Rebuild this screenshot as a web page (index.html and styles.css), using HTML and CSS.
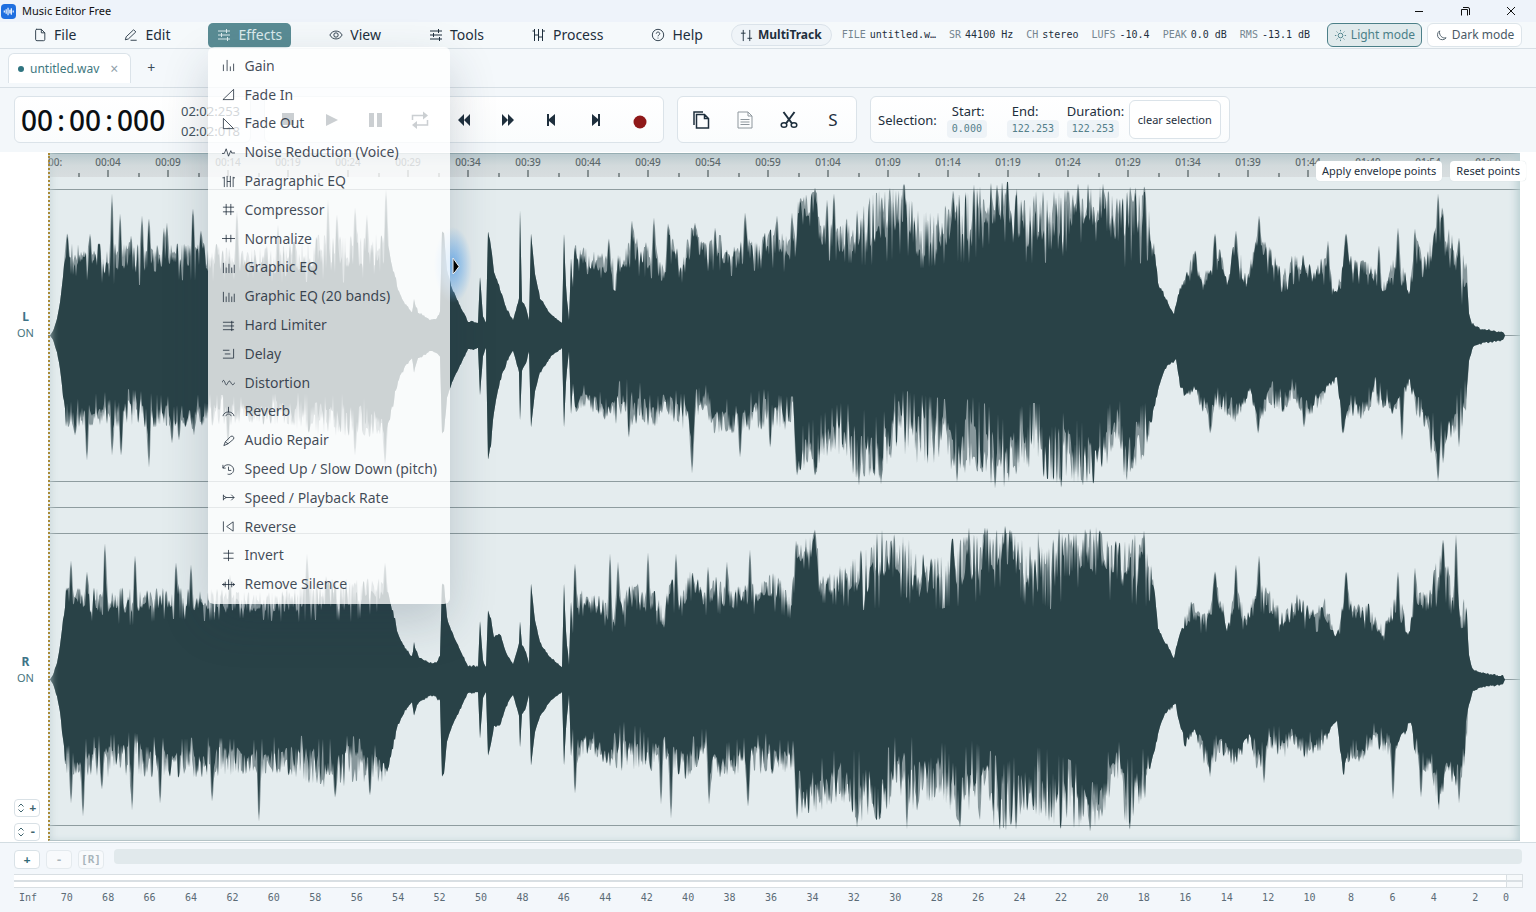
FILE: index.html
```html
<!DOCTYPE html>
<html lang="en">
<head>
<meta charset="utf-8">
<title>Music Editor Free</title>
<link rel="stylesheet" href="styles.css">
</head>
<body>
<svg class="sprite" aria-hidden="true">
  <symbol id="i-file" viewBox="0 0 14 16"><path d="M2.500 1.500h6l4 4v7.500a1.500 1.500 0 0 1-1.500 1.500h-7.500a1.500 1.500 0 0 1-1.500-1.500v-10a1.500 1.500 0 0 1 1-1.500zM8.500 1.500v4h4"/></symbol>
  <symbol id="i-edit" viewBox="0 0 16 16"><path d="M1.500 13.500l1-3.500 8.500-8 2.500 2.500-8.500 8zM7.500 14h7"/></symbol>
  <symbol id="i-sliders" viewBox="0 0 14 14"><path d="M1 3h12M1 7h12M1 11h12M9.500 1v4M4.500 5v4M10.500 9v4"/></symbol>
  <symbol id="i-eye" viewBox="0 0 16 16"><path d="M1 8c3-6 11-6 14 0-3 6-11 6-14 0z"/><circle cx="8" cy="8" r="2.500"/></symbol>
  <symbol id="i-process" viewBox="0 0 14 14"><path d="M2.500 1v12M6.500 1v12M10.500 1v12M.500 3h2M2.500 7h4M6.500 9h4M10.500 3h2.500"/></symbol>
  <symbol id="i-help" viewBox="0 0 16 16"><circle cx="8" cy="8" r="6.500"/><path d="M6 6.500c0-2.500 4-2.500 4 0 0 1.500-2 1.500-2 3M8 11v1"/></symbol>
  <symbol id="i-multi" viewBox="0 0 14 14"><path d="M3.500 1v12M1 4.500h5M10.500 1v12M8 10h5"/></symbol>
  <symbol id="i-sun" viewBox="0 0 14 14"><circle cx="7" cy="7" r="2.500"/><path d="M7 1v1.500M7 11.500v1.500M1 7h1.500M11.500 7h1.500M2.800 2.800l1 1M10.200 10.200l1 1M2.800 11.200l1-1M10.200 3.800l1-1"/></symbol>
  <symbol id="i-moon" viewBox="0 0 14 14"><path d="M5 2a5.200 5.200 0 1 0 7 7.500c-4 1-8-2.500-7-7.500z"/></symbol>
  <symbol id="i-gain" viewBox="0 0 14 14"><path d="M1.500 6v7M5.500 1v12M9 8v5M12.500 5v8"/></symbol>
  <symbol id="i-fadein" viewBox="0 0 14 14"><path d="M1 12.500L12.500 1.500v11z"/></symbol>
  <symbol id="i-fadeout" viewBox="0 0 14 14"><path d="M1.500 1.500v11h11z"/></symbol>
  <symbol id="i-noise" viewBox="0 0 14 14"><path d="M0 8h2.500l2-5 2.500 8 2.500-6 1 2.500H14"/></symbol>
  <symbol id="i-para" viewBox="0 0 14 14"><path d="M2.500 2v11M5.500 1v12M9 1v12M12 2v11M.500 3h2M5.500 7H9M12 3h2"/></symbol>
  <symbol id="i-comp" viewBox="0 0 14 14"><path d="M1 4.500h12M1 9.500h12M4.500 1v12M9.500 1v12"/></symbol>
  <symbol id="i-norm" viewBox="0 0 14 14"><path d="M0 7h14M4.500 3v8M9.500 3v8"/></symbol>
  <symbol id="i-geq" viewBox="0 0 14 14"><path d="M1.500 2v11M4.500 7v6M7.500 3v10M10.500 7v6M13.200 4v9"/></symbol>
  <symbol id="i-limit" viewBox="0 0 14 14"><path d="M1 3.500h12M1 7.500h12M1 11.500h12M10.500 2v11"/></symbol>
  <symbol id="i-delay" viewBox="0 0 14 14"><path d="M1 3.500h7M3 7.500h6M1 12h11.500V2"/></symbol>
  <symbol id="i-dist" viewBox="0 0 14 14"><path d="M0 7c1.500-4 2.500-2 3.500 1s2 1 3-1 2-2 3 0 2 4 4.500 0"/></symbol>
  <symbol id="i-reverb" viewBox="0 0 14 14"><path d="M1 12c1-6 11-6 12 0M4 12c1-3 5-3 6 0M7 2v6"/></symbol>
  <symbol id="i-repair" viewBox="0 0 14 14"><path d="M2 12.500l1.500-4 6-6c2-1 4 1 3 3l-6 5zM3.500 8.500l3 2"/></symbol>
  <symbol id="i-speed" viewBox="0 0 14 14"><path d="M1 5.500c2-5 10-5 11.500 1 .500 4-3 6.500-6.500 5.500M7 4v4h3M1 2v3.500h3"/></symbol>
  <symbol id="i-rate" viewBox="0 0 14 14"><path d="M1.500 4v6M1.500 5l3 2-3 2M4 7h9M10 4l3 3-3 3"/></symbol>
  <symbol id="i-reverse" viewBox="0 0 14 14"><path d="M1.500 1.500v11M12 2v10L5 7z"/></symbol>
  <symbol id="i-invert" viewBox="0 0 14 14"><path d="M1.500 4.500h11M1.500 10h11M7 1v12"/></symbol>
  <symbol id="i-silence" viewBox="0 0 14 14"><path d="M0 7h14M3.500 4v6M7 1.500v11M10.500 4v6M2 5.500v3M12.500 5.500v3"/></symbol>
</svg>

<header class="titlebar">
  <svg class="logo" viewBox="0 0 16 16" aria-hidden="true"><rect width="16" height="16" rx="4" fill="#1f6fe0"/><path d="M3.500 7v2M5.500 5.500v5M7.500 4v8M9.500 6v4M11 4.500v7M13 7v2" stroke="#fff" stroke-width="1.200" fill="none"/></svg>
  <h1 class="title">Music Editor Free</h1>
  <div class="window-controls">
    <button aria-label="Minimize"><svg viewBox="0 0 10 10"><path d="M1 5.500h8"/></svg></button>
    <button aria-label="Restore"><svg viewBox="0 0 10 10"><path d="M1.500 9.500v-6h6v6M3 1.500h5q1.500 0 1.500 1.500v6"/></svg></button>
    <button aria-label="Close"><svg viewBox="0 0 10 10"><path d="M1 1l8 8M9 1l-8 8"/></svg></button>
  </div>
</header>

<nav class="menubar">
  <div class="menus">
    <button class="menu"><svg><use href="#i-file"/></svg>File</button>
    <button class="menu"><svg><use href="#i-edit"/></svg>Edit</button>
    <div class="menu-wrap">
      <button class="menu menu-open" aria-expanded="true"><svg><use href="#i-sliders"/></svg>Effects</button>
      <ul class="dropdown">
        <li><button><svg><use href="#i-gain"/></svg>Gain</button></li>
        <li><button><svg><use href="#i-fadein"/></svg>Fade In</button></li>
        <li><button><svg><use href="#i-fadeout"/></svg>Fade Out</button></li>
        <li><button><svg><use href="#i-noise"/></svg>Noise Reduction (Voice)</button></li>
        <li><button><svg><use href="#i-para"/></svg>Paragraphic EQ</button></li>
        <li><button><svg><use href="#i-comp"/></svg>Compressor</button></li>
        <li><button><svg><use href="#i-norm"/></svg>Normalize</button></li>
        <li><button><svg><use href="#i-geq"/></svg>Graphic EQ</button></li>
        <li><button><svg><use href="#i-geq"/></svg>Graphic EQ (20 bands)</button></li>
        <li><button><svg><use href="#i-limit"/></svg>Hard Limiter</button></li>
        <li><button><svg><use href="#i-delay"/></svg>Delay</button></li>
        <li><button><svg><use href="#i-dist"/></svg>Distortion</button></li>
        <li><button><svg><use href="#i-reverb"/></svg>Reverb</button></li>
        <li><button><svg><use href="#i-repair"/></svg>Audio Repair</button></li>
        <li><button><svg><use href="#i-speed"/></svg>Speed Up / Slow Down (pitch)</button></li>
        <li><button><svg><use href="#i-rate"/></svg>Speed / Playback Rate</button></li>
        <li><button><svg><use href="#i-reverse"/></svg>Reverse</button></li>
        <li><button><svg><use href="#i-invert"/></svg>Invert</button></li>
        <li><button><svg><use href="#i-silence"/></svg>Remove Silence</button></li>
      </ul>
    </div>
    <button class="menu"><svg><use href="#i-eye"/></svg>View</button>
    <button class="menu"><svg><use href="#i-sliders"/></svg>Tools</button>
    <button class="menu"><svg><use href="#i-process"/></svg>Process</button>
    <button class="menu"><svg><use href="#i-help"/></svg>Help</button>
  </div>
  <button class="multitrack"><svg><use href="#i-multi"/></svg>MultiTrack</button>
  <dl class="stats">
    <div><dt>FILE</dt><dd>untitled.w…</dd></div>
    <div><dt>SR</dt><dd>44100 Hz</dd></div>
    <div><dt>CH</dt><dd>stereo</dd></div>
    <div><dt>LUFS</dt><dd>-10.4</dd></div>
    <div><dt>PEAK</dt><dd>0.0 dB</dd></div>
    <div><dt>RMS</dt><dd>-13.1 dB</dd></div>
  </dl>
  <div class="modes">
    <button class="mode mode-on" aria-pressed="true"><svg><use href="#i-sun"/></svg>Light mode</button>
    <button class="mode" aria-pressed="false"><svg><use href="#i-moon"/></svg>Dark mode</button>
  </div>
</nav>

<div class="tabs">
  <div class="tab"><span class="dot"></span><span>untitled.wav</span><button class="tab-close" aria-label="Close tab">×</button></div>
  <button class="tab-add" aria-label="New tab">+</button>
</div>

<div class="toolbar">
  <section class="card clock">
    <div class="time"><span>00</span><i>:</i><span>00</span><i>:</i><span>000</span></div>
    <div class="lengths"><span>02:02:253</span><span>02:02:018</span></div>
  </section>
  <section class="card tools">
    <button aria-label="Stop"><svg viewBox="0 0 20 20"><path d="M4 3h12v12H4z"/></svg></button>
    <button aria-label="Play"><svg viewBox="0 0 20 20"><path d="M4 4l12 6-12 6z"/></svg></button>
    <button aria-label="Pause"><svg viewBox="0 0 20 20"><path d="M3 3h5v14H3zM11 3h5v14h-5z"/></svg></button>
    <button aria-label="Loop"><svg viewBox="0 0 20 20"><path class="line" d="M2.500 10V5.500H15M17.500 10v5H5"/><path d="M13 1.500l5 4-5 4zM7 11l-5 4 5 4z"/></svg></button>
    <button aria-label="Rewind"><svg viewBox="0 0 20 20"><path d="M10 4v12L4 10zM16 4v12l-6-6z"/></svg></button>
    <button aria-label="Fast forward"><svg viewBox="0 0 20 20"><path d="M4 4v12l6-6zM10 4v12l6-6z"/></svg></button>
    <button aria-label="To start"><svg viewBox="0 0 20 20"><path d="M5 4h2v5l6-5v12l-6-5v5H5z"/></svg></button>
    <button aria-label="To end"><svg viewBox="0 0 20 20"><path d="M14 4h-2v5L6 4v12l6-5v5h2z"/></svg></button>
    <button aria-label="Record"><svg viewBox="0 0 20 20"><circle cx="10" cy="12" r="6.500" fill="#8f1919"/></svg></button>
  </section>
  <section class="card tools">
    <button aria-label="Copy"><svg viewBox="0 0 20 20"><path class="line" d="M5.500 4.500h8l4 4v9.500h-12zM13.500 4.500v4h4M3 15V2h9"/></svg></button>
    <button aria-label="Paste" class="dim"><svg viewBox="0 0 20 20"><path class="thin" d="M3 2h10l4 4v12H3zM13 2v4h4M5.500 9.500h9M5.500 12h9M5.500 14.500h9"/></svg></button>
    <button aria-label="Cut"><svg viewBox="0 0 20 20"><path class="cut" d="M4.500 2l8.500 11.500M15.500 2L7 13.500"/><ellipse class="line" cx="5" cy="15" rx="2.800" ry="2.300"/><ellipse class="line" cx="15" cy="15" rx="2.800" ry="2.300"/></svg></button>
    <button class="letter">S</button>
  </section>
  <section class="card selection">
    <span class="selection-title">Selection:</span>
    <div class="field"><span>Start:</span><output>0.000</output></div>
    <div class="field"><span>End:</span><output>122.253</output></div>
    <div class="field field-wide"><span>Duration:</span><output>122.253</output></div>
    <button class="clear">clear selection</button>
  </section>
</div>

<main class="editor">
  <aside class="gutter">
    <button class="channel"><b>L</b>ON</button>
    <button class="channel"><b>R</b>ON</button>
    <div class="vzoom">
      <button aria-label="Increase vertical zoom"><svg viewBox="0 0 8 10"><path d="M1.500 3.500L4 1l2.500 2.500M1.500 6.500L4 9l2.500-2.500"/></svg>+</button>
      <button aria-label="Decrease vertical zoom"><svg viewBox="0 0 8 10"><path d="M1.500 3.500L4 1l2.500 2.500M1.500 6.500L4 9l2.500-2.500"/></svg>-</button>
    </div>
  </aside>
  <div class="wave">
    <svg id="wave" class="wave-svg" viewBox="48 153 1472 688" preserveAspectRatio="none" role="img" aria-label="Stereo waveform">
      <path class="guide" d="M48 189.500H1520M48 481.500H1520M48 507.500H1520M48 533.500H1520M48 825.500H1520M48 335.500H1520M48 679.500H1520"/>
    </svg>
    <div class="ruler" id="ruler"><span class="ruler-zero">00:</span></div>
    <div class="edge"></div>
    <div class="glow"></div>
    <svg class="pointer" viewBox="0 0 8 18" aria-hidden="true"><path d="M1 1v16l2-2 4-5.500z"/></svg>
    <div class="points"><button>Apply envelope points</button><button>Reset points</button></div>
  </div>
</main>

<footer class="bottom">
  <div class="scroll-row">
    <button>+</button><button class="off">-</button><button class="off">[R]</button>
    <div class="scrollbar"></div>
  </div>
  <div class="meter"><div class="meter-bars"></div><div class="meter-clip"></div></div>
  <div class="scale" id="scale"><span>Inf</span></div>
</footer>
<script src="wave.js"></script>
</body>
</html>
```

FILE: styles.css
```css
* { box-sizing: border-box; }
body {
  margin: 0;
  min-height: 100vh;
  display: flex;
  flex-direction: column;
  background: #f4f8fb;
  color: #1e2f3d;
  font: 14px/20px "Noto Sans", "Open Sans", sans-serif;
  overflow: hidden;
}
button {
  font: inherit;
  color: inherit;
  background: none;
  border: 0;
  padding: 0;
  margin: 0;
}
svg { fill: none; stroke: currentColor; }
.sprite { position: absolute; width: 0; height: 0; }

.titlebar {
  display: flex;
  align-items: center;
  height: 22px;
  gap: 6px;
  background: #eef3fa;
  color: #111;
}
.logo { width: 15px; height: 15px; margin-left: 1px; stroke: none; }
.title { margin: 0; font-size: 11px; font-weight: 400; }
.window-controls { display: flex; margin-left: auto; padding-right: 2px; }
.window-controls button { width: 46px; height: 22px; display: grid; place-items: center; }
.window-controls svg { width: 10px; height: 10px; }

.menubar {
  display: flex;
  align-items: center;
  height: 27px;
  padding: 0 14px 0 23px;
  border-bottom: 1px solid #d7dfe5;
  background: #f5f9fb;
}
.menus { display: flex; gap: 28px; }
.menu-wrap { position: relative; }
.menu {
  display: flex;
  align-items: center;
  gap: 7px;
  height: 25px;
  padding: 0 10px;
  border-radius: 5px;
}
.menu svg { width: 14px; height: 14px; }
.menu-open { padding: 0 9px; background: #5a8c94; color: #dcebed; }
.dropdown {
  position: absolute;
  z-index: 5;
  top: 24px;
  left: 0;
  width: 242px;
  height: 557px;
  margin: 0;
  padding: 5px 0;
  list-style: none;
  display: flex;
  flex-direction: column;
  border-radius: 6px;
  background: rgba(255, 255, 255, 0.77);
  box-shadow: 0 18px 48px rgba(30, 50, 70, 0.2);
}
.dropdown li { flex: 1; display: flex; }
.dropdown button {
  flex: 1;
  display: flex;
  align-items: center;
  gap: 9px;
  padding: 0 14px;
  text-align: left;
  white-space: nowrap;
  color: rgba(22, 36, 50, 0.82);
}
.dropdown svg { width: 13px; height: 13px; flex: none; }
.multitrack {
  display: flex;
  align-items: center;
  gap: 5px;
  height: 22px;
  margin-left: 18px;
  padding: 0 9px 0 8px;
  border: 1px solid #dbe3ea;
  border-radius: 11px;
  background: #eff4f8;
  font-size: 12px;
  font-weight: 700;
}
.multitrack svg { width: 13px; height: 13px; }
.stats {
  display: flex;
  gap: 13px;
  margin: 0 0 0 10px;
  font: 10px/14px "DejaVu Sans Mono", monospace;
  white-space: nowrap;
}
.stats div { display: flex; gap: 4px; }
.stats dt { color: #748590; }
.stats dd { margin: 0; }
.modes { display: flex; gap: 5px; margin-left: auto; }
.mode {
  display: flex;
  align-items: center;
  justify-content: center;
  gap: 4px;
  width: 95px;
  height: 24px;
  border: 1px solid #dde5ea;
  border-radius: 6px;
  background: #fff;
  font-size: 12px;
  color: #4a5a66;
}
.mode svg { width: 13px; height: 13px; }
.mode-on { background: #e0eaec; border-color: #4b7f88; color: #4b7f88; }

.tabs {
  display: flex;
  align-items: flex-end;
  height: 39px;
  padding: 0 8px;
  border-bottom: 1px solid #d7dfe5;
}
.tab {
  display: flex;
  align-items: center;
  height: 30px;
  margin-bottom: 4px;
  padding: 0 9px;
  border: 1px solid #dbe3e9;
  border-bottom: 0;
  border-radius: 6px 6px 0 0;
  background: #fff;
  color: #3e7780;
  font-size: 12px;
}
.dot { width: 6px; height: 6px; margin-right: 6px; border-radius: 50%; background: #2f7480; }
.tab-close { width: 14px; margin-left: 8px; color: #8fa0aa; font-size: 14px; }
.tab-add { width: 20px; margin: 0 0 9px 10px; color: #3c4d58; }

.toolbar {
  display: flex;
  gap: 13px;
  padding: 8px 14px 9px;
  background: #f3f7fa;
}
.card {
  display: flex;
  align-items: center;
  height: 47px;
  border: 1px solid #dbe3e9;
  border-radius: 6px;
  background: linear-gradient(#fff, #fafcfd);
}
.clock { width: 237px; padding: 0 5px 0 6px; justify-content: space-between; }
.time { display: flex; font-size: 28px; font-weight: 500; line-height: 40px; color: #0b0f12; }
.time i { width: 16px; text-align: center; font-style: normal; }
.lengths { display: flex; flex-direction: column; width: 64px; font-size: 13px; color: #44535e; padding-top: 2px; }
.tools { padding: 0 1px; }
.tools button { width: 44px; height: 44px; display: grid; place-items: center; color: #1e2f3d; }
.tools svg { width: 20px; height: 20px; fill: currentColor; stroke: none; }
.tools .line { fill: none; stroke: currentColor; stroke-width: 1.5; }
.tools .thin { fill: none; stroke: currentColor; stroke-width: 1; }
.tools .cut { fill: none; stroke: currentColor; stroke-width: 2; }
.tools .dim { color: #8e979d; }
.tools .letter { font-size: 17px; }
.selection { padding: 0 8px 0 7px; font-size: 13px; }
.selection-title { margin-right: 10px; }
.field { display: flex; flex-direction: column; align-items: flex-start; width: 60px; line-height: 18px; }
.field span { padding-left: 5px; }
.field-wide span { padding-left: 0; }
.field output {
  padding: 0 5px;
  border-radius: 4px;
  background: #eef3f7;
  color: #54808a;
  font: 10px/18px "DejaVu Sans Mono", monospace;
}
.clear {
  height: 39px;
  margin-left: 2px;
  padding: 0 8px;
  border: 1px solid #dbe3e9;
  border-radius: 6px;
  background: #fff;
  font-size: 11px;
}

.editor { flex: 1; display: flex; padding-right: 16px; background: #fff; }
.gutter { position: relative; width: 48px; display: flex; flex-direction: column; }
.channel {
  flex: 1;
  display: flex;
  flex-direction: column;
  justify-content: center;
  align-items: center;
  padding: 1px 0 0 3px;
  font-size: 11px;
  line-height: 16px;
  color: #47747e;
}
.channel b { font-size: 12px; color: #3e7488; }
.vzoom { position: absolute; left: 14px; bottom: 1px; display: grid; gap: 6px; }
.vzoom button {
  display: flex;
  align-items: center;
  justify-content: space-between;
  width: 26px;
  height: 18px;
  padding: 0 3px 0 2px;
  border: 1px solid #d9e1e6;
  border-radius: 4px;
  font: bold 11px/16px "DejaVu Sans Mono", monospace;
  color: #40656f;
}
.vzoom svg { width: 8px; height: 10px; }
.wave {
  position: relative;
  flex: 1;
  margin: 1px 0;
  background: #e4ecee;
}
.wave-svg { position: absolute; inset: 0; width: 100%; height: 100%; stroke: none; }
.guide { stroke: #8e9c9f; stroke-width: 1; }
.shape { fill: #294247; }
.haze { fill: #294247; fill-opacity: 0.5; }
.ruler {
  position: relative;
  display: grid;
  grid-template-columns: 30px repeat(24, 1fr);
  height: 24px;
  padding-right: 2px;
  border-top: 1px solid #8ba3a8;
  background: linear-gradient(#bccbcf, #d2dadc 50%, #d8dddf);
  color: #5c686b;
  font-size: 10px;
  font-weight: 500;
  line-height: 16px;
}
.ruler span {
  text-align: center;
  background:
    linear-gradient(#858f91, #858f91) 50% 100% / 2px 7px no-repeat,
    linear-gradient(#858f91, #858f91) 0 100% / 2px 4px no-repeat;
}
.ruler .ruler-zero { text-align: left; background: none; }
.edge {
  position: absolute;
  inset: 0;
  border-left: 2px dotted #a98a35;
  border-bottom: 1px solid #b4c3c7;
  box-shadow: inset -6px 0 8px -3px #b9ced2, inset 6px 0 8px -6px #c3d2d5;
}
.glow {
  position: absolute;
  left: 386px;
  top: 74px;
  width: 38px;
  height: 76px;
  background: radial-gradient(closest-side, rgba(96, 172, 246, 0.8), rgba(120, 185, 246, 0.4) 60%, rgba(150, 200, 246, 0));
}
.pointer { position: absolute; left: 404px; top: 104px; width: 8px; height: 18px; stroke: #fff; fill: #000; }
.points { position: absolute; top: 8px; right: -6px; display: flex; gap: 8px; }
.points button {
  height: 20px;
  padding: 0 6px;
  border-radius: 4px;
  background: #fff;
  box-shadow: 0 0 1px #c5d0d5;
  font-size: 11px;
  line-height: 20px;
}

.bottom { height: 70px; border-top: 1px solid #d3dde2; background: #f3f7fb; }
.scroll-row { display: flex; align-items: flex-start; gap: 6px; padding: 6px 14px 0; }
.scroll-row button {
  width: 26px;
  height: 19px;
  margin-top: 1px;
  border: 1px solid #d9e2e7;
  border-radius: 4px;
  background: #fff;
  color: #2f6a76;
  font: bold 11px/17px "DejaVu Sans Mono", monospace;
}
.scroll-row .off { background: #f8fafc; color: #a9b5bb; border-color: #e4eaee; }
.scrollbar { flex: 1; height: 15px; margin-left: 4px; border-radius: 4px; background: #e1e9ec; }
.meter { display: flex; height: 14px; margin: 5px 13px 0 14px; }
.meter-bars, .meter-clip {
  border: 1px solid #d9dfe3;
  border-left: 0;
  background: linear-gradient(#d9dfe3, #d9dfe3) 0 50% / 100% 2px no-repeat #fff;
}
.meter-bars { flex: 1; }
.meter-clip { width: 16px; background-color: #f6f9fb; }
.scale {
  display: grid;
  grid-template-columns: 36px repeat(35, 1fr) 20px;
  padding: 3px 20px 0 10px;
  font: 10px/14px "DejaVu Sans Mono", monospace;
  color: #5b6b76;
  text-align: center;
}
```

FILE: wave.js
```js
// Envelope knots: [x, solid level, typical peak level]
const middleTop = [
  [574, 70, 92], [600, 62, 84], [615, 50, 78], [635, 66, 100], [655, 62, 88], [664, 48, 70], [670, 78, 105], [682, 58, 85], [690, 84, 110],
  [705, 68, 92], [718, 72, 105], [730, 64, 88], [745, 68, 98], [760, 72, 100], [775, 74, 108], [792, 66, 98], [796, 80, 110], [798, 116, 138], [817, 114, 148],
  [820, 82, 110], [845, 80, 116], [865, 80, 134], [880, 84, 150], [895, 88, 148], [905, 96, 152], [915, 76, 128], [935, 78, 122], [950, 84, 140],
  [972, 84, 146], [985, 100, 152], [1012, 104, 154], [1028, 80, 132], [1040, 88, 152], [1055, 82, 150], [1070, 98, 146], [1080, 102, 152], [1100, 104, 154],
  [1112, 86, 140], [1122, 76, 136], [1132, 88, 152], [1145, 82, 140], [1150, 88, 128], [1155, 78, 88], [1158, 50, 54], [1163, 40, 45], [1170, 27, 30], [1174, 20, 22],
  [1178, 38, 44], [1182, 48, 60], [1193, 54, 82], [1205, 48, 66], [1215, 72, 100], [1222, 64, 82], [1227, 48, 60], [1235, 70, 98], [1247, 46, 66],
  [1255, 74, 95], [1265, 70, 98], [1283, 46, 66], [1297, 60, 88], [1312, 50, 70], [1325, 56, 84], [1335, 38, 48], [1340, 42, 60], [1346, 88, 100], [1352, 56, 76],
  [1370, 54, 76], [1383, 40, 54], [1398, 62, 92], [1409, 40, 48], [1416, 70, 98], [1426, 60, 84], [1434, 70, 110], [1440, 100, 135], [1448, 78, 115], [1456, 62, 90],
  [1463, 36, 86], [1467, 50, 70], [1469, 22, 26], [1472, 10, 14], [1480, 6, 8], [1497, 3, 5], [1503, 3, 5], [1505, 0, 0]
];
const middleBottom = [
  [575, 68, 84], [585, 52, 74], [598, 58, 80], [608, 68, 86], [622, 50, 92], [640, 54, 90], [655, 70, 92], [665, 52, 80], [680, 64, 96], [692, 66, 104],
  [705, 50, 70], [712, 74, 98], [735, 66, 98], [765, 60, 94], [780, 66, 98], [794, 66, 90], [797, 100, 136], [817, 90, 134], [840, 76, 122], [857, 82, 144],
  [880, 92, 140], [897, 64, 116], [915, 70, 132], [945, 74, 126], [955, 98, 150], [970, 72, 134], [990, 84, 148], [1005, 96, 152], [1025, 78, 130], [1045, 80, 142],
  [1060, 88, 150], [1085, 98, 150], [1100, 96, 146], [1117, 64, 106], [1125, 92, 148], [1145, 76, 120], [1150, 84, 98], [1155, 66, 70], [1160, 46, 50], [1166, 30, 34], [1176, 23, 27],
  [1180, 44, 54], [1185, 56, 68], [1194, 48, 56], [1202, 56, 80], [1210, 72, 98], [1220, 52, 74], [1235, 70, 88], [1250, 50, 62], [1258, 74, 96], [1270, 50, 70],
  [1285, 52, 80], [1292, 46, 62], [1305, 58, 84], [1320, 54, 72], [1337, 40, 44], [1343, 88, 98], [1350, 62, 80], [1362, 66, 84], [1375, 46, 68], [1395, 64, 80], [1410, 40, 50],
  [1418, 66, 88], [1430, 72, 96], [1438, 100, 138], [1448, 74, 100], [1458, 66, 108], [1466, 50, 90], [1469, 24, 28], [1473, 10, 12], [1486, 6, 8], [1503, 4, 6], [1505, 0, 0]
];
const decays = (a, b, c, d) => [
  [388, 86, 92], [393, 62, 72], [398, 44, 48], [405, 30, 33], [412, 22, 24], [414, 34, 38], [418, 22, 25], [430, 15, 17], [436, 16, 18],
  [440, 20, 24], [442, a, a], [444, a - 4, a], [447, a * 0.62, a * 0.65], [452, 46, 48], [460, 29, 31], [468, 13, 15], [478, 12, 14], [480, 58, 60], [483, 18, 22], [486, 12, 13],
  [488, b, b], [491, b * 0.84, b * 0.9], [494, b * 0.6, b * 0.63], [500, 44, 48], [507, 24, 27], [513, 15, 16], [517, 28, 30], [519, 36, 38], [520, c, c], [522, 34, 36], [526, 27, 29], [529, 15, 16],
  [531, d, d], [535, d * 0.6, d * 0.62], [540, 36, 39], [550, 21, 23], [562, 12, 13], [564, d, d], [566, 42, 50], [569, 14, 16], [571, 72, 80], [573, 40, 50]
];
const start = (lo, hi) => [[50, 0, 0], [53, 4, 5], [57, 16, 18], [60, 32, 34], [63, 58, 62], [66, lo + 8, hi], [90, lo, hi], [130, lo - 4, hi], [170, lo + 2, hi], [207, lo, hi],
  [250, lo + 2, hi - 4], [290, lo - 2, hi], [325, lo + 4, hi + 12], [350, lo, hi + 8], [380, lo + 10, hi + 10]];

function rng(seed) {
  return () => { seed = (seed * 1664525 + 1013904223) >>> 0; return seed / 4294967296; };
}
function side(knots, spikes, seed) {
  const rand = rng(seed), solid = [], haze = [];
  let k = 0, slow = 0.4;
  for (let x = 50; x <= 1505; x += 1) {
    while (k < knots.length - 2 && x > knots[k + 1][0]) k++;
    const [x0, l0, p0] = knots[k], [x1, l1, p1] = knots[k + 1];
    const t = (x - x0) / (x1 - x0);
    const lo = l0 + (l1 - l0) * t, hi = p0 + (p1 - p0) * t, range = hi - lo;
    slow = slow * 0.72 + rand() * 0.28;
    const fast = Math.pow(rand(), 2.6);
    let v = lo + range * Math.min(1, Math.max(0, slow - 0.25) * 0.8 + fast * 0.85);
    if (range > 15 && rand() < 0.12) v = lo - range * 0.2;
    let soft = range > 15 ? v + (hi - v) * Math.pow(rand(), 1.6) : v;
    for (const [sx, sv] of spikes) {
      const d = Math.abs(x - sx);
      if (d < 2) v = Math.max(v, v + (sv - v) * (d ? 0.4 : 0.9));
      if (d < 3) soft = Math.max(soft, v + (sv - v) * (1 - d / 3));
    }
    solid.push([x, v]);
    haze.push([x, soft]);
  }
  return { solid, haze };
}
function shape(name, center, top, bottom) {
  const up = top.map(([x, v]) => x + " " + (center - v).toFixed(1));
  const down = bottom.slice().reverse().map(([x, v]) => x + " " + (center + v).toFixed(1));
  const path = document.createElementNS("http://www.w3.org/2000/svg", "path");
  path.setAttribute("class", name);
  path.setAttribute("d", "M" + up.concat(down).join("L") + "Z");
  document.getElementById("wave").appendChild(path);
}
function draw(center, top, bottom) {
  shape("haze", center, top.haze, bottom.haze);
  shape("shape", center, top.solid, bottom.solid);
}

draw(335.5,
  side([...start(60, 92), ...decays(104, 104, 125, 102), ...middleTop],
    [[67, 102], [90, 102], [112, 142], [120, 122], [131, 100], [142, 120], [149, 117], [164, 108], [167, 113], [193, 127], [201, 105], [237, 125], [278, 111], [328, 136], [337, 121],
     [355, 128], [367, 121], [386, 146], [609, 97], [632, 115], [654, 118], [668, 112], [695, 113], [715, 108], [745, 123], [777, 120], [792, 123], [815, 148], [827, 136], [834, 142],
     [953, 145], [974, 151], [997, 151], [1078, 152], [1103, 152], [1144, 149], [1195, 85], [1215, 102], [1236, 105], [1259, 120], [1328, 95], [1346, 102], [1379, 90], [1398, 108], [1415, 107], [1438, 142], [1443, 125], [1459, 98]], 11),
  side([...start(64, 92), ...decays(98, 124, 85, 92), ...middleBottom],
    [[75, 100], [87, 125], [112, 120], [121, 120], [149, 132], [172, 108], [179, 105], [194, 100], [228, 110], [355, 120], [385, 130], [629, 102], [692, 138], [740, 122], [770, 112], [797, 140], [815, 140],
     [859, 150], [881, 149], [995, 153], [1061, 152], [1210, 98], [1258, 98], [1304, 92], [1343, 98], [1402, 105], [1431, 118], [1438, 146], [1443, 128], [1459, 112]], 29));
draw(679.5,
  side([...start(64, 92), ...decays(96, 69, 58, 96), ...middleTop],
    [[71, 119], [87, 108], [105, 136], [135, 124], [176, 117], [191, 115], [307, 126], [230, 105], [385, 117], [575, 116], [610, 126], [618, 118], [648, 127], [676, 126], [708, 113], [727, 118],
     [750, 130], [796, 139], [815, 150], [969, 152], [1010, 150], [1059, 151], [1100, 149], [1144, 149], [1215, 108], [1236, 115], [1259, 124], [1346, 108], [1398, 108], [1415, 112], [1443, 140], [1456, 145]], 47),
  side([...start(64, 98), ...decays(97, 76, 68, 86), ...middleBottom],
    [[71, 124], [83, 137], [102, 110], [132, 131], [160, 124], [212, 122], [259, 142], [335, 118], [370, 116], [575, 114], [661, 125], [671, 139], [709, 125], [748, 127], [797, 140], [857, 148],
     [907, 150], [960, 148], [1016, 150], [1061, 149], [1090, 152], [1130, 150], [1264, 104], [1393, 120], [1421, 118], [1459, 124]], 83));

const ruler = document.getElementById("ruler");
for (let i = 0; i < 24; i++) {
  const s = 4 + i * 5;
  const label = document.createElement("span");
  label.textContent = "0" + Math.floor(s / 60) + ":" + String(s % 60).padStart(2, "0");
  ruler.appendChild(label);
}
const scale = document.getElementById("scale");
for (let db = 70; db >= 0; db -= 2) {
  const label = document.createElement("span");
  label.textContent = db;
  scale.appendChild(label);
}
```
